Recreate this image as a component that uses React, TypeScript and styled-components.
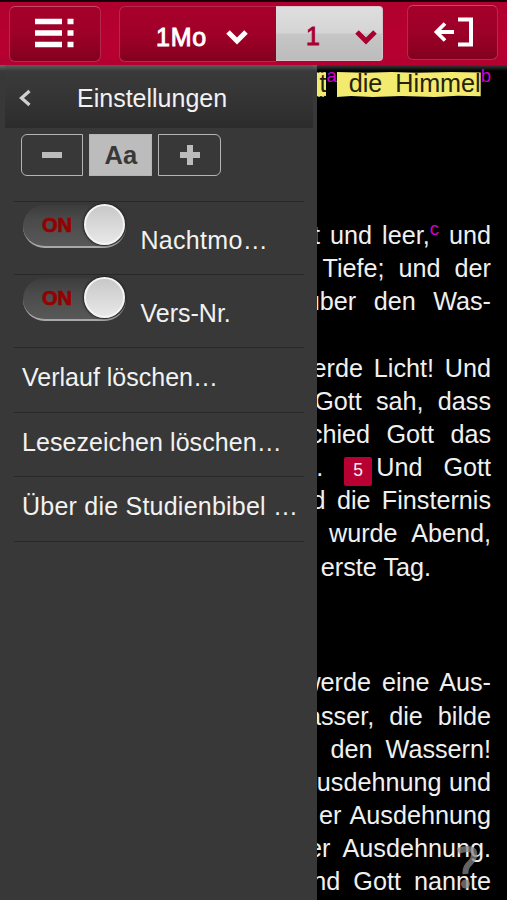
import React from "react";
import styled, { createGlobalStyle } from "styled-components";

const Global = createGlobalStyle`
  * { box-sizing: border-box; }
  body { margin: 0; background: #000; font-family: "Liberation Sans", Arial, sans-serif; }
  button { font: inherit; padding: 0; margin: 0; }
`;

const Screen = styled.div`
  width: 507px;
  height: 900px;
  overflow: hidden;
  display: flex;
  flex-direction: column;
  background: #000;
`;

const Toolbar = styled.header`
  flex: none;
  height: 65px;
  display: flex;
  align-items: flex-start;
  padding: 3px 9px 0 9px;
  border-top: 2px solid #16000a;
  background: linear-gradient(#b0002e, #b70031 70%, #b30030);
`;

const ToolButton = styled.button<{ $w: number; $gap?: number; $up?: boolean }>`
  width: ${(p) => p.$w}px;
  height: ${(p) => (p.$up ? 55 : 56)}px;
  margin: ${(p) => (p.$up ? 0 : 1)}px ${(p) => p.$gap ?? 0}px 0 0;
  padding-bottom: 2px;
  display: flex;
  align-items: center;
  justify-content: center;
  border: 1px solid #b32a4e;
  border-top-color: #c54a68;
  border-radius: 6px;
  background: linear-gradient(#a5002b, #9d0028 50%, #84001e);
`;

const Picker = styled.div`
  display: flex;
  height: 56px;
  margin-top: 1px;
  margin-right: 24px;
`;

const PickerPart = styled.button<{ $light?: boolean }>`
  display: flex;
  align-items: center;
  justify-content: space-between;
  width: ${(p) => (p.$light ? 107 : 157)}px;
  height: ${(p) => (p.$light ? 55 : 56)}px;
  padding: ${(p) => (p.$light ? "6px 5px 0 30px" : "6px 28px 0 36px")};
  border: 1px solid ${(p) => (p.$light ? "#d5c5ca" : "#b32a4e")};
  border-right-width: ${(p) => (p.$light ? 1 : 0)}px;
  border-left-width: ${(p) => (p.$light ? 0 : 1)}px;
  border-radius: ${(p) => (p.$light ? "0 4px 4px 0" : "6px 0 0 6px")};
  background: ${(p) =>
    p.$light
      ? "linear-gradient(#dedede, #d5d5d5 48%, #c6c6c6 52%, #bcbcbc)"
      : "linear-gradient(#a8002c, #a00029 50%, #84001e)"};
  color: ${(p) => (p.$light ? "#a90030" : "#fff")};
  font-size: 25px;
  letter-spacing: 0.8px;
  font-weight: 400;
  -webkit-text-stroke: 0.9px ${(p) => (p.$light ? "#a90030" : "#fff")};
`;

const Body = styled.div`
  flex: 1;
  min-height: 0;
  display: flex;
`;

const Menu = styled.nav`
  flex: none;
  width: 317px;
  background: linear-gradient(#666, #3a3a3a 6px, #383838 8px);
  color: #f2f2f2;
  font-size: 25px;
`;

const MenuHeader = styled.div`
  display: flex;
  align-items: center;
  height: 63px;
  margin: 0 4px 0 5px;
  padding: 3px 0 0 13px;
  background: linear-gradient(#5c5c5c, #3a3a3a 6px, #353535 50%, #2c2c2c);
`;

const MenuTitle = styled.h1`
  margin: 0 0 0 45px;
  font-size: 25px;
  font-weight: 400;
`;

const SizeRow = styled.div`
  display: flex;
  gap: 6px;
  padding: 6px 0 0 21px;
  height: 73px;
`;

const SizeButton = styled.button<{ $kind: "first" | "mid" | "last" }>`
  width: ${(p) => (p.$kind === "mid" ? 63 : 62.4)}px;
  height: 42px;
  display: flex;
  align-items: center;
  justify-content: center;
  border: 1.5px solid #b4b4b4;
  border-radius: ${(p) =>
    p.$kind === "first" ? "6px 0 0 6px" : p.$kind === "last" ? "0 6px 6px 0" : "0"};
  background: ${(p) => (p.$kind === "mid" ? "#bcbcbc" : "transparent")};
  color: #383838;
  font-size: 25.5px;
  font-weight: 700;
`;

const List = styled.ul`
  list-style: none;
  margin: 0 13px 0 14px;
  padding: 0;
  border-bottom: 1px solid #282828;
`;

const Item = styled.li<{ $h: number }>`
  display: flex;
  height: ${(p) => p.$h}px;
  padding-left: 8px;
  border-top: 1px solid #282828;
  white-space: nowrap;
`;

const Label = styled.span<{ $top: number; $left?: number; $track?: number }>`
  margin: ${(p) => p.$top}px 0 0 ${(p) => p.$left ?? 0}px;
  line-height: 28px;
  letter-spacing: ${(p) => p.$track ?? 0}px;
`;

const Switch = styled.span`
  flex: none;
  width: 103px;
  height: 43px;
  margin-top: 3px;
  margin-left: 1px;
  display: flex;
  align-items: center;
  justify-content: flex-end;
  padding-right: 1px;
  border-radius: 22px;
  border-bottom: 2px solid #a8a8a8;
  background: linear-gradient(#3c3c3c, #4a4a4a 35%, #585858);
`;

const SwitchText = styled.span`
  width: 33px;
  margin-right: 9px;
  color: #950000;
  font-size: 20px;
  font-weight: 700;
  -webkit-text-stroke: 0.7px #950000;
`;

const Knob = styled.span`
  width: 41px;
  height: 41px;
  margin-top: -2px;
  border-radius: 50%;
  border: 2px solid #f4f4f4;
  background: linear-gradient(#c8c8c8, #e8e8e8);
  box-shadow: 0 0 2px 1px #222;
`;

const Reader = styled.main`
  flex: 1;
  min-width: 0;
  overflow: hidden;
  padding: 1px 16px 0 0;
  background: linear-gradient(#3c3c3c, #000 6px);
  color: #f0f0f0;
  font-size: 25.2px;
  line-height: 33.17px;
`;

const Paragraph = styled.div<{ $gap: number }>`
  margin-top: ${(p) => p.$gap}px;
`;

const Line = styled.div<{ $ws?: number; $end?: number }>`
  display: flex;
  justify-content: flex-end;
  height: 33.17px;
  padding-right: ${(p) => p.$end ?? 0}px;
  white-space: pre;
  word-spacing: ${(p) => p.$ws ?? 0}px;
`;

const Note = styled.span`
  color: #d000d0;
  font-size: 18.5px;
  line-height: 20px;
`;

const Mark = styled.span<{ $pad?: number }>`
  height: 25px;
  margin-top: 6px;
  padding-left: ${(p) => p.$pad ?? 0}px;
  line-height: 22px;
  color: #25220c;
  background: #f2eb70;
  clip-path: polygon(0 0, 20% 3%, 38% 0, 55% 3%, 80% 0, 100% 2%, 100% 97%, 84% 95%, 68% 100%, 45% 96%, 25% 100%, 10% 96%, 0 100%);
`;

const Verse = styled.span`
  flex: none;
  width: 28px;
  height: 29px;
  margin: 6px 4px 0 0;
  border-radius: 2px;
  background: #b80032;
  font-size: 17.5px;
  line-height: 27px;
  text-align: center;
  word-spacing: 0;
`;

const Help = styled.div`
  position: fixed;
  left: 456px;
  top: 845px;
  width: 22px;
  height: 46px;
  opacity: 0.75;
`;

const Chevron = ({ color }: { color: string }) => (
  <svg width="22" height="16" viewBox="0 0 22 16">
    <path d="M2 3 L11 12 L20 3" fill="none" stroke={color} strokeWidth="5" />
  </svg>
);

const SignIcon = ({ plus }: { plus?: boolean }) => (
  <svg width="22" height="22" viewBox="0 0 22 22">
    <path d={plus ? "M1 11H21M11 1V21" : "M1 11H21"} stroke="#bcbcbc" strokeWidth="6" />
  </svg>
);

type Row = { text: string; ws: number; end?: number };

const verses: Row[] = [
  { text: "Tiefe; und der", ws: 7 },
  { text: "über den Was-", ws: 10.5 },
  { text: "", ws: 0 },
  { text: "erde Licht! Und", ws: 3.8 },
  { text: "Gott sah, dass", ws: 7.2 },
  { text: "chied Gott das", ws: 9.4 },
];

const closing: Row[] = [
  { text: "d die Finsternis", ws: 4.3 },
  { text: "wurde Abend,", ws: 8 },
  { text: "erste Tag.", ws: 0, end: 60 },
];

const second: Row[] = [
  { text: "werde eine Aus-", ws: 4 },
  { text: "asser, die bilde", ws: 8 },
  { text: "den Wassern!", ws: 6 },
  { text: "usdehnung und", ws: 0.5 },
  { text: "er Ausdehnung", ws: 2.5 },
  { text: "er Ausdehnung.", ws: 6.5 },
  { text: "nd Gott nannte", ws: 6 },
];

const Lines = ({ rows }: { rows: Row[] }) => (
  <>
    {rows.map((r, i) => (
      <Line key={i} $ws={r.ws} $end={r.end}>
        {r.text}
      </Line>
    ))}
  </>
);

const actions = [
  { text: "Verlauf löschen…", track: 0 },
  { text: "Lesezeichen löschen…", track: 0.06 },
  { text: "Über die Studienbibel …", track: 0.23 },
];

export default function App() {
  return (
    <Screen>
      <Global />
      <Toolbar>
        <ToolButton $w={92} $gap={18}>
          <svg width="40" height="30" viewBox="0 0 40 30">
            <path d="M0 3.5H27M0 15H27M0 26.5H27M32.5 3.5H38.5M32.5 15H38.5M32.5 26.5H38.5" stroke="#fff" strokeWidth="5.5" />
          </svg>
        </ToolButton>
        <Picker>
          <PickerPart>
            1Mo
            <Chevron color="#fff" />
          </PickerPart>
          <PickerPart $light>
            1
            <Chevron color="#a90030" />
          </PickerPart>
        </Picker>
        <ToolButton $w={91} $up>
          <svg width="40" height="30" viewBox="0 0 40 30">
            <path d="M3.5 15H21M12 6.5L3.5 15L12 23.5" fill="none" stroke="#fff" strokeWidth="3.8" />
            <path d="M25 2.5H38V27.5H25" fill="none" stroke="#fff" strokeWidth="4" />
          </svg>
        </ToolButton>
      </Toolbar>
      <Body>
        <Menu>
          <MenuHeader>
            <svg width="14" height="18" viewBox="0 0 14 18">
              <path d="M11.5 2L3.5 9L11.5 16" fill="none" stroke="#d0d0d0" strokeWidth="3.2" />
            </svg>
            <MenuTitle>Einstellungen</MenuTitle>
          </MenuHeader>
          <SizeRow>
            <SizeButton $kind="first"><SignIcon /></SizeButton>
            <SizeButton $kind="mid">Aa</SizeButton>
            <SizeButton $kind="last"><SignIcon plus /></SizeButton>
          </SizeRow>
          <List>
            {["Nachtmo…", "Vers-Nr."].map((label) => (
              <Item key={label} $h={73}>
                <Switch>
                  <SwitchText>ON</SwitchText>
                  <Knob />
                </Switch>
                <Label $top={24} $left={14.5} $track={label === "Nachtmo…" ? 0.3 : 0}>{label}</Label>
              </Item>
            ))}
            {actions.map((a) => (
              <Item key={a.text} $h={64.6}>
                <Label $top={15} $track={a.track}>{a.text}</Label>
              </Item>
            ))}
          </List>
        </Menu>
        <Reader>
          <Line $ws={6}>
            <Mark $pad={3}>t</Mark>
            <Note>a</Note>
            <Mark $pad={12}>die Himmel</Mark>
            <Note>b</Note>
          </Line>
          <Paragraph $gap={119.8}>
            <Line $ws={3}>
              t und leer,<Note>c</Note> und
            </Line>
            <Lines rows={verses} />
            <Line $ws={14}>
              {". "}
              <Verse>5</Verse>
              {"Und Gott"}
            </Line>
            <Lines rows={closing} />
          </Paragraph>
          <Paragraph $gap={82.8}>
            <Lines rows={second} />
          </Paragraph>
        </Reader>
      </Body>
      <Help>
        <svg width="22" height="46" viewBox="0 0 22 46">
          <path d="M2 6Q13 2 17.500 6Q20 12 14 18Q9 22 9.500 29" fill="none" stroke="#858585" strokeWidth="6" />
          <circle cx="9.5" cy="39" r="4.500" fill="#858585" />
        </svg>
      </Help>
    </Screen>
  );
}
